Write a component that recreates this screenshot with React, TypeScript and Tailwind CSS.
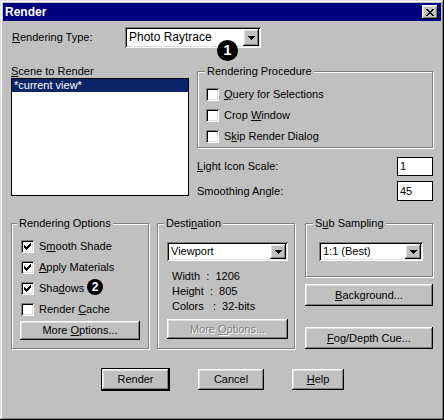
import type { ReactNode } from "react";

const raised =
  "bg-[#c0c0c0] shadow-[inset_-1px_-1px_#000,inset_1px_1px_#fff,inset_-2px_-2px_#808080,inset_2px_2px_#dfdfdf]";
const sunken =
  "bg-white shadow-[inset_1px_1px_#808080,inset_-1px_-1px_#fff,inset_2px_2px_#000,inset_-2px_-2px_#dfdfdf]";

const CHECK: [number, number][] = [
  [6, 0], [5, 1], [6, 1], [0, 2], [4, 2], [5, 2], [6, 2],
  [0, 3], [1, 3], [3, 3], [4, 3], [5, 3], [0, 4], [1, 4], [2, 4], [3, 4], [4, 4],
  [1, 5], [2, 5], [3, 5], [2, 6],
];

const CLOSE: [number, number][] = [
  [0, 0], [1, 0], [6, 0], [7, 0], [1, 1], [2, 1], [5, 1], [6, 1],
  [2, 2], [3, 2], [4, 2], [5, 2], [3, 3], [4, 3], [2, 4], [3, 4], [4, 4], [5, 4],
  [1, 5], [2, 5], [5, 5], [6, 5], [0, 6], [1, 6], [6, 6], [7, 6],
];

function Pixels({ pts, w, h, color = "#000" }: { pts: [number, number][]; w: number; h: number; color?: string }) {
  return (
    <svg width={w} height={h} viewBox={`0 0 ${w} ${h}`} shapeRendering="crispEdges">
      {pts.map(([x, y]) => (
        <rect key={`${x}-${y}`} x={x} y={y} width={1} height={1} fill={color} />
      ))}
    </svg>
  );
}

function Key({ children }: { children: ReactNode }) {
  return <span className="underline underline-offset-[1px]">{children}</span>;
}

function Check({ checked, children }: { checked?: boolean; children: ReactNode }) {
  return (
    <div className="flex h-[13px] items-center">
      <div className={`flex size-[13px] shrink-0 items-center justify-center ${sunken}`}>
        {checked && <Pixels pts={CHECK} w={7} h={7} />}
      </div>
      <span className="ml-[5px] leading-[13px]">{children}</span>
    </div>
  );
}

function Group({ label, left, className, children }: { label: ReactNode; left: number; className: string; children: ReactNode }) {
  return (
    <div className={`relative border border-[#808080] shadow-[inset_1px_1px_#fff,1px_1px_#fff] ${className}`}>
      <span
        className="absolute top-[-7px] bg-[#c0c0c0] px-[2px] leading-[13px]"
        style={{ left }}
      >
        {label}
      </span>
      {children}
    </div>
  );
}

function Arrow() {
  return (
    <div className={`flex h-full w-[16px] items-center justify-center ${raised}`}>
      <svg width="7" height="4" viewBox="0 0 7 4" shapeRendering="crispEdges">
        <path d="M0 0h7v1H0zM1 1h5v1H1zM2 2h3v1H2zM3 3h1v1H3z" fill="#000" />
      </svg>
    </div>
  );
}

function Select({ value, className }: { value: string; className: string }) {
  return (
    <div className={`flex p-[2px] ${sunken} ${className}`}>
      <span className="flex-1 pl-[2px] leading-[15px] self-center">{value}</span>
      <Arrow />
    </div>
  );
}

function Button({ children, className, disabled, isDefault }: { children: ReactNode; className: string; disabled?: boolean; isDefault?: boolean }) {
  return (
    <div
      className={`flex items-center justify-center ${raised} ${isDefault ? "outline outline-1 outline-black" : ""} ${
        disabled ? "text-[#808080] [text-shadow:1px_1px_#fff]" : ""
      } ${className}`}
    >
      <span>{children}</span>
    </div>
  );
}

function Badge({ n, size, className }: { n: number; size: string; className: string }) {
  return (
    <div className={`absolute flex items-center justify-center rounded-full bg-black font-bold text-white ${size} ${className}`}>
      {n}
    </div>
  );
}

export default function App() {
  return (
    <div className="h-[420px] w-[444px] bg-[#c0c0c0] font-['Liberation_Sans',Arial,sans-serif] text-[11px] text-black shadow-[inset_-1px_-1px_#000,inset_1px_1px_#dfdfdf,inset_-2px_-2px_#808080,inset_2px_2px_#fff]">
      <div className="mx-[3px] flex h-[18px] translate-y-[3px] items-center bg-[#000080] pl-[2px] pr-[3px]">
        <span className="flex-1 text-[12px] font-bold text-white">Render</span>
        <div className={`flex h-[14px] w-[16px] items-center justify-center ${raised}`}>
          <Pixels pts={CLOSE} w={8} h={7} />
        </div>
      </div>

      <div className="mt-[9px] flex h-[21px] items-center">
        <span className="ml-[12px] w-[113px]">
          <Key>R</Key>endering Type:
        </span>
        <div className="relative">
          <Select value="Photo Raytrace" className="h-[21px] w-[136px] text-[12px]" />
          <Badge n={1} size="size-[21px] text-[15px]" className="left-[92px] top-[13px]" />
        </div>
      </div>

      <div className="mt-[17px] flex h-[136px]">
        <div className="ml-[11px] flex w-[178px] flex-col">
          <span className="h-[13px] leading-[13px]">
            <Key>S</Key>cene to Render
          </span>
          <div className="h-[118px] border border-black bg-white">
            <div className="h-[13px] bg-[#0a246a] pl-[2px] leading-[13px] text-white">*current view*</div>
          </div>
        </div>

        <div className="ml-[8px] flex w-[236px] flex-col">
          <Group label="Rendering Procedure" left={7} className="mt-[6px] h-[77px]">
            <div className="ml-[8px] mt-[16px] flex flex-col gap-[8px]">
              <Check>
                <Key>Q</Key>uery for Selections
              </Check>
              <Check>
                Crop <Key>W</Key>indow
              </Check>
              <Check>
                S<Key>k</Key>ip Render Dialog
              </Check>
            </div>
          </Group>
          <div className="mt-[9px] flex h-[19px] items-center justify-between">
            <span>
              <Key>L</Key>ight Icon Scale:
            </span>
            <div className="h-[19px] w-[36px] border border-black bg-white pl-[2px] leading-[17px]">1</div>
          </div>
          <div className="mt-[5px] flex h-[20px] items-center justify-between">
            <span>Smoothing Angle:</span>
            <div className="h-[20px] w-[36px] border border-black bg-white pl-[2px] leading-[18px]">45</div>
          </div>
        </div>
      </div>

      <div className="mt-[22px] flex h-[126px]">
        <Group label="Rendering Options" left={5} className="ml-[11px] w-[138px]">
          <div className="relative ml-[9px] mt-[16px] flex flex-col gap-[8px]">
            <Check checked>
              S<Key>m</Key>ooth Shade
            </Check>
            <Check checked>
              <Key>A</Key>pply Materials
            </Check>
            <Check checked>
              Sha<Key>d</Key>ows
            </Check>
            <Check>
              Render <Key>C</Key>ache
            </Check>
            <Badge n={2} size="size-[16px] text-[12px]" className="left-[66px] top-[39px]" />
          </div>
          <Button className="ml-[8px] mt-[5px] h-[19px] w-[120px]">
            More <Key>O</Key>ptions...
          </Button>
        </Group>

        <Group
          label={
            <>
              Desti<Key>n</Key>ation
            </>
          }
          left={6}
          className="ml-[8px] w-[138px]"
        >
          <Select value="Viewport" className="ml-[9px] mt-[18px] h-[19px] w-[121px]" />
          <div className="ml-[14px] mt-[8px] whitespace-pre leading-[15px]">
            <div>Width  :  1206</div>
            <div>Height  :  805</div>
            <div>Colors   :  32-bits</div>
          </div>
          <Button disabled className="ml-[9px] mt-[5px] h-[20px] w-[121px]">
            More <Key>O</Key>ptions...
          </Button>
        </Group>

        <div className="ml-[10px] flex w-[128px] flex-col">
          <Group
            label={
              <>
                S<Key>u</Key>b Sampling
              </>
            }
            left={7}
            className="h-[54px]"
          >
            <Select value="1:1 (Best)" className="ml-[13px] mt-[18px] h-[19px] w-[104px]" />
          </Group>
          <Button className="mt-[7px] h-[22px] w-full">
            <Key>B</Key>ackground...
          </Button>
          <Button className="mt-[21px] h-[22px] w-full">
            <Key>F</Key>og/Depth Cue...
          </Button>
        </div>
      </div>

      <div className="mt-[20px] flex h-[22px]">
        <Button isDefault className="ml-[102px] h-[21px] w-[67px]">
          Render
        </Button>
        <Button className="ml-[29px] h-[21px] w-[66px]">Cancel</Button>
        <Button className="ml-[28px] h-[21px] w-[52px]">
          <Key>H</Key>elp
        </Button>
      </div>
    </div>
  );
}
